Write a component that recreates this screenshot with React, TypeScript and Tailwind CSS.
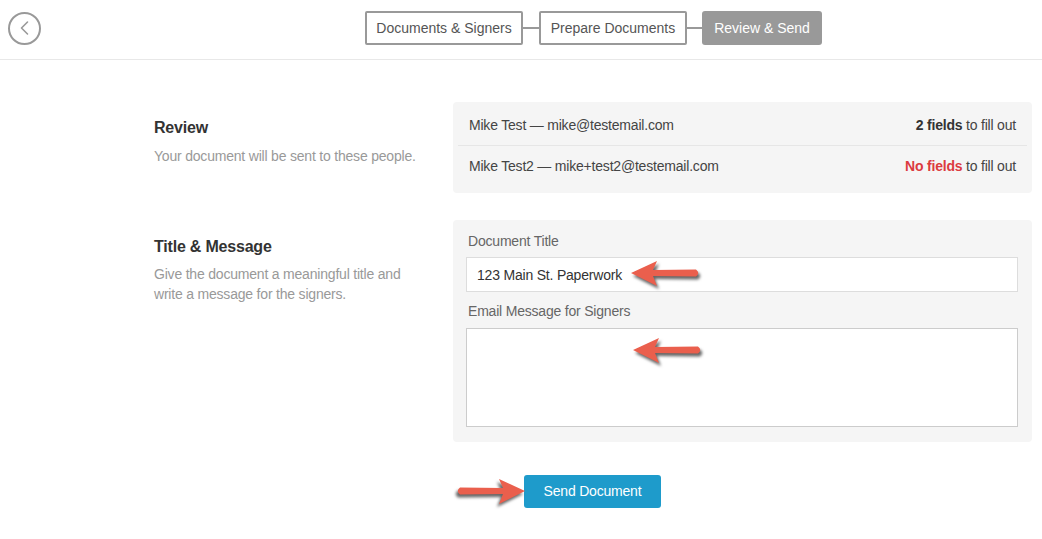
import React from "react";

function Arrow({ flip = false }: { flip?: boolean }) {
  return (
    <svg
      width="74"
      height="32"
      viewBox="0 0 74 32"
      className="block"
      style={{ transform: flip ? "scaleX(-1)" : undefined, filter: "drop-shadow(2px 3px 1.5px rgba(0,0,0,0.6))" }}
    >
      <path
        d="M1 13 L27 1 L23 10 L66 9.5 Q70.5 13 66 16.5 L23 16 L27 26 Z"
        fill="#ea5f4d"
        strokeLinejoin="round"
      />
    </svg>
  );
}

export default function App() {
  return (
    <div className="w-[1042px] h-[539px] bg-white overflow-hidden text-[14px] tracking-[-0.2px] text-[#444]" style={{ fontFamily: '"Liberation Sans", Arial, sans-serif' }}>
      {/* Header */}
      <div className="h-[60px] border-b border-[#e8e8e8] flex items-center pl-[8px] pb-[3px]">
        <div className="w-[33px] h-[33px] rounded-full border-2 border-[#999] flex items-center justify-center">
          <svg width="14" height="16" viewBox="0 0 14 16">
            <path d="M9.5 2 L3.5 8 L9.5 14" fill="none" stroke="#999" strokeWidth="1.6" strokeLinecap="round" strokeLinejoin="round" />
          </svg>
        </div>
        <div className="ml-[324px] flex items-center">
          <div className="w-[158px] h-[34px] flex items-center justify-center border-2 border-[#999] rounded-[2px] text-[#555] tracking-normal">Documents &amp; Signers</div>
          <div className="w-[16px] h-[2px] bg-[#999]" />
          <div className="w-[148px] h-[34px] flex items-center justify-center border-2 border-[#999] rounded-[2px] text-[#555] tracking-normal">Prepare Documents</div>
          <div className="w-[15px] h-[2px] bg-[#999]" />
          <div className="w-[120px] h-[34px] flex items-center justify-center bg-[#999] rounded-[3px] text-white tracking-normal">Review &amp; Send</div>
        </div>
      </div>

      {/* Content */}
      <div className="pl-[154px] pr-[10px] pt-[42px] flex flex-col gap-[27px]">
        {/* Review section */}
        <div className="flex">
          <div className="w-[299px] pt-[16px]">
            <div className="text-[16px] leading-[20px] font-bold text-[#333]">Review</div>
            <div className="mt-[8px] leading-[20px] text-[#999]">Your document will be sent to these people.</div>
          </div>
          <div className="flex-1 bg-[#f5f5f5] rounded-[4px] pt-[4px] pb-[7px] px-[5px]">
            <div className="h-[40px] px-[11px] flex items-center justify-between border-b border-[#e6e6e6]">
              <span>Mike Test — mike@testemail.com</span>
              <span><b className="text-[#333]">2 fields</b> to fill out</span>
            </div>
            <div className="h-[40px] px-[11px] flex items-center justify-between">
              <span>Mike Test2 — mike+test2@testemail.com</span>
              <span><b className="text-[#dc3b3f]">No fields</b> to fill out</span>
            </div>
          </div>
        </div>

        {/* Title & Message section */}
        <div className="flex">
          <div className="w-[299px] pt-[17px]">
            <div className="text-[16px] leading-[20px] font-bold text-[#333]">Title &amp; Message</div>
            <div className="mt-[7px] leading-[20px] text-[#999]">
              Give the document a meaningful title and<br />write a message for the signers.
            </div>
          </div>
          <div className="flex-1 bg-[#f5f5f5] rounded-[4px] pt-[11px] pb-[15px] pl-[13px] pr-[14px]">
            <div className="pl-[2px] leading-[20px] text-[#666]">Document Title</div>
            <div className="relative mt-[6px]">
              <input
                readOnly
                defaultValue="123 Main St. Paperwork"
                className="w-full h-[35px] bg-white border border-[#ddd] px-[10px] text-[14px] tracking-[-0.2px] text-[#333] outline-none"
                style={{ fontFamily: '"Liberation Sans", Arial, sans-serif' }}
              />
              <div className="absolute left-[164px] top-[3px]">
                <Arrow />
              </div>
            </div>
            <div className="mt-[9px] pl-[2px] leading-[20px] text-[#666]">Email Message for Signers</div>
            <div className="relative mt-[7px]">
              <textarea
                readOnly
                className="block w-full h-[99px] bg-white border border-[#ccc] resize-none outline-none"
              />
              <div className="absolute left-[166px] top-[9px]">
                <Arrow />
              </div>
            </div>
          </div>
        </div>

        {/* Send button */}
        <div className="flex pl-[370px] pt-[6px]">
          <div className="relative">
            <div className="absolute left-[-72px] top-[3px]">
              <Arrow flip />
            </div>
            <button className="h-[33px] w-[137px] rounded-[3px] bg-[#1e9bcb] text-white text-[14px] tracking-[-0.2px]">Send Document</button>
          </div>
        </div>
      </div>
    </div>
  );
}
